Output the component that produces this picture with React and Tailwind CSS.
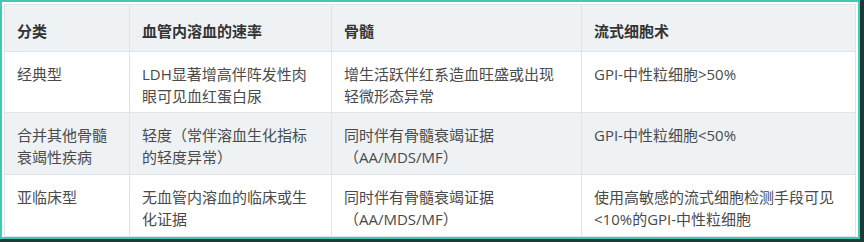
import React from "react";

const rows = [
  {
    bg: "bg-white",
    h: "h-[61px]",
    cells: [
      ["经典型"],
      ["LDH显著增高伴阵发性肉", "眼可见血红蛋白尿"],
      ["增生活跃伴红系造血旺盛或出现", "轻微形态异常"],
      ["GPI-中性粒细胞>50%"],
    ],
  },
  {
    bg: "bg-[#eef2f5]",
    h: "h-[62px]",
    cells: [
      ["合并其他骨髓", "衰竭性疾病"],
      ["轻度（常伴溶血生化指标", "的轻度异常）"],
      ["同时伴有骨髓衰竭证据", "（AA/MDS/MF）"],
      ["GPI-中性粒细胞<50%"],
    ],
  },
  {
    bg: "bg-white",
    h: "h-[61px]",
    cells: [
      ["亚临床型"],
      ["无血管内溶血的临床或生", "化证据"],
      ["同时伴有骨髓衰竭证据", "（AA/MDS/MF）"],
      ["使用高敏感的流式细胞检测手段可见", "<10%的GPI-中性粒细胞"],
    ],
  },
];

const headers = ["分类", "血管内溶血的速率", "骨髓", "流式细胞术"];
const cols = "grid grid-cols-[124px_202px_250px_276px]";

export default function App() {
  return (
    <div
      className="w-[864px] h-[242px] bg-white border-r-4 border-b-[3px] border-[#1d3a36]"
      style={{ fontFamily: '"Open Sans", "Noto Sans CJK SC", sans-serif' }}
    >
      <div className="w-full h-full border-2 border-[#40c9b5] bg-white p-[2px]">
        <div className="border border-[#dfe4e8] text-[15px] leading-[22px]">
          {/* header */}
          <div className={`${cols} h-[47px] bg-[#eef2f5] border-b border-[#dfe4e8]`}>
            {headers.map((h, i) => (
              <div
                key={i}
                className={`px-3 pt-[15px] font-bold text-[#333] ${i > 0 ? "border-l border-[#dfe4e8]" : ""}`}
              >
                {h}
              </div>
            ))}
          </div>

          {rows.map((row, r) => (
            <div
              key={r}
              className={`${cols} ${row.h} ${row.bg} ${r < rows.length - 1 ? "border-b border-[#dfe4e8]" : ""}`}
            >
              {row.cells.map((lines, i) => (
                <div
                  key={i}
                  className={`px-3 pt-[11px] text-[#4a4a4a] ${i > 0 ? "border-l border-[#dfe4e8]" : ""}`}
                >
                  {lines.map((l, j) => (
                    <div key={j} className="whitespace-nowrap">
                      {l}
                    </div>
                  ))}
                </div>
              ))}
            </div>
          ))}
        </div>
      </div>
    </div>
  );
}
